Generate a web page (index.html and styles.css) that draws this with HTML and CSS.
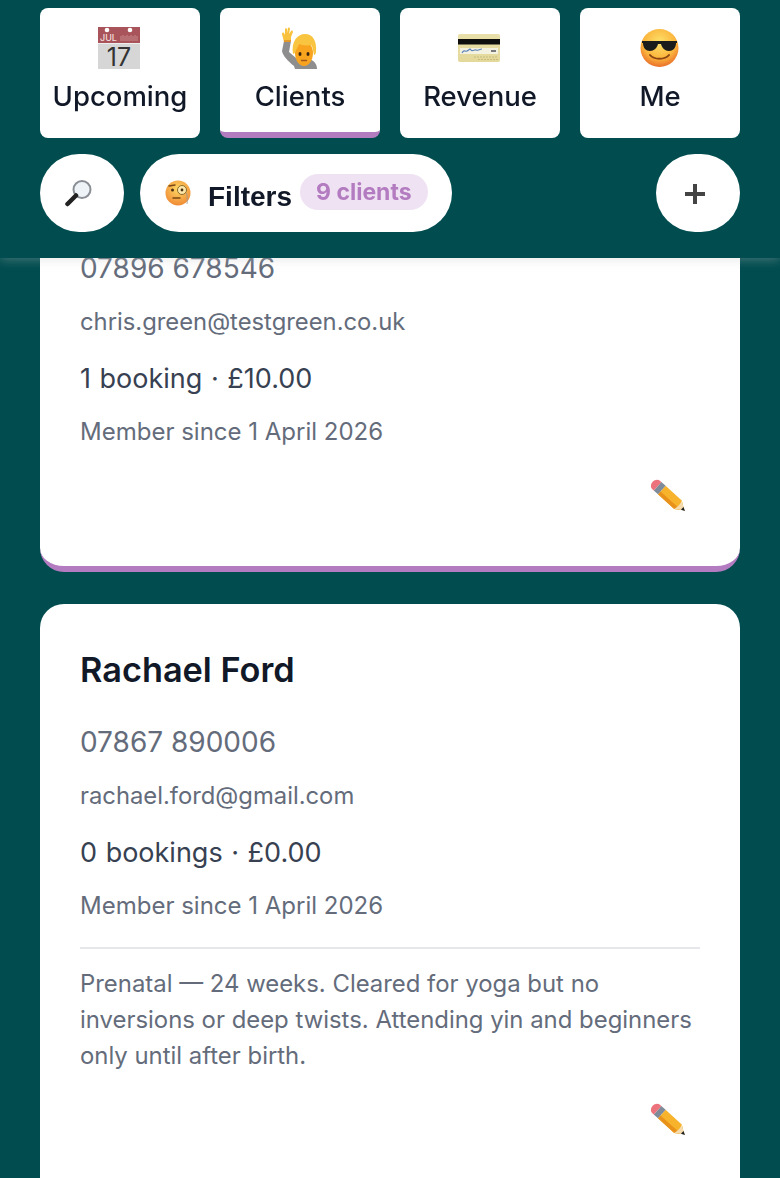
FILE: index.html
```html
<!DOCTYPE html>
<html lang="en">
<head>
  <meta charset="UTF-8" />
  <title>Clients</title>
  <meta name="viewport" content="width=device-width, initial-scale=1.0" />
  <link rel="stylesheet" href="styles.css">
</head>
<body>
  <header class="topbar">
    <nav class="tabs">
      <a class="tab">
        <svg class="tab-icon" viewBox="0 0 44 44">
          <rect x="0" y="1" width="42" height="42" fill="#d6d6d6"/>
          <rect x="0" y="1" width="42" height="16" fill="#a9545a"/>
          <rect x="0" y="17" width="42" height="1" fill="#eee"/>
          <circle cx="9" cy="4" r="2.3" fill="#fff"/>
          <circle cx="32" cy="4" r="2.3" fill="#fff"/>
          <text x="2" y="14.5" class="cal-month">JUL</text>
          <path d="M23 10v5M25 9v6M27 10v5M29 9v6M31 10v5M33 9v6M35 10v5M37 9v6M39 10v5" stroke="#c58a8e" stroke-width="1"/>
          <text x="21" y="39.5" class="cal-day">17</text>
        </svg>
        <span>Upcoming</span>
      </a>
      <a class="tab tab-active">
        <svg class="tab-icon" viewBox="0 0 44 44">
          <path d="M6 15h7l-2 11 7 6 12 1c6 1 9 5 9 10H17l-1-3c-6-5-11-10-12-15z" fill="#8e8e8e"/>
          <path d="M6 16 4 8c0-1 1-2 2-1l1 2V3c0-1 2-1 2 0v4l1-5c1-1 2 0 2 1l-1 5 2-3c1-1 2 0 2 1l-2 5v4z" fill="#f8c23e"/>
          <path d="M6 14h7v2H6z" fill="#e69a2a"/>
          <path d="M17 27c0-7 4-11 9-11s9 4 9 11c0 7-4 13-9 13s-9-6-9-13z" fill="#f8a41e"/>
          <path d="M15 28c-2-12 4-20 12-20s12 7 11 18c0 1-1 3-2 3-1-4-1-8-3-10-5 1-10 0-12-1-1 3-3 6-4 8 0 1-1 2-2 2z" fill="#f9c440"/>
          <ellipse cx="22" cy="28" rx="1.5" ry="1.9" fill="#3b2412"/>
          <ellipse cx="30" cy="28" rx="1.5" ry="1.9" fill="#3b2412"/>
          <path d="M23.5 34.5h5" stroke="#a5561b" stroke-width="1.3" stroke-linecap="round"/>
        </svg>
        <span>Clients</span>
      </a>
      <a class="tab">
        <svg class="tab-icon" viewBox="0 0 44 44">
          <defs>
            <linearGradient id="cardGold" x1="0" y1="0" x2="0" y2="1">
              <stop offset="0" stop-color="#e8dfaa"/>
              <stop offset="1" stop-color="#e4d99a"/>
            </linearGradient>
          </defs>
          <rect x="0" y="8" width="42" height="28" rx="2" fill="url(#cardGold)"/>
          <rect x="0" y="13" width="42" height="5.5" fill="#0e0e0e"/>
          <rect x="2" y="22" width="38" height="6" fill="#f3f1df"/>
          <path d="M4 27c2-4 3-1 5-2s3-3 4-1 4-1 5 0 4-1 6-1" stroke="#5f83bb" stroke-width="1.1" fill="none"/>
          <rect x="33" y="24" width="5" height="2" fill="#7a7a7a"/>
          <path d="M16 31h24M20 33.5h20" stroke="#c9bb7c" stroke-width="1" stroke-dasharray="2 1"/>
        </svg>
        <span>Revenue</span>
      </a>
      <a class="tab">
        <svg class="tab-icon" viewBox="0 0 44 44">
          <defs>
            <radialGradient id="faceSun" cx="50%" cy="35%" r="65%">
              <stop offset="0" stop-color="#fde16a"/>
              <stop offset="0.65" stop-color="#fbb53c"/>
              <stop offset="1" stop-color="#ea6f2a"/>
            </radialGradient>
          </defs>
          <circle cx="21.5" cy="22" r="19" fill="url(#faceSun)"/>
          <path d="M4 15h35v2h-1c0 5-3 8-7 8s-7-3-8-7h-3c-1 4-4 7-8 7s-7-3-7-8H4z" fill="#1b1b1b"/>
          <path d="M12 29c4 5 15 5 19 0" stroke="#8a4513" stroke-width="2" fill="none" stroke-linecap="round"/>
        </svg>
        <span>Me</span>
      </a>
    </nav>
    <div class="actions">
      <button class="round-btn search-btn">
        <svg class="btn-icon" viewBox="0 0 28 28">
          <circle cx="18" cy="10.5" r="8.5" fill="#eef3f7" stroke="#8a8f96" stroke-width="2"/>
          <path d="M12 16.5 3.5 25" stroke="#222" stroke-width="4.5" stroke-linecap="round"/>
        </svg>
      </button>
      <button class="filter-btn">
        <svg class="btn-icon" viewBox="0 0 28 28">
          <defs>
            <radialGradient id="faceThink" cx="50%" cy="35%" r="65%">
              <stop offset="0" stop-color="#fdd862"/>
              <stop offset="1" stop-color="#f08a35"/>
            </radialGradient>
          </defs>
          <circle cx="14" cy="14" r="12.5" fill="url(#faceThink)"/>
          <circle cx="18" cy="11" r="4.5" fill="#fde7a8" stroke="#8a6a2c" stroke-width="1"/>
          <circle cx="18" cy="11" r="1.4" fill="#4a3116"/>
          <circle cx="8.5" cy="11" r="1.5" fill="#4a3116"/>
          <path d="M5 7l6-1M9 19h7" stroke="#7a4a15" stroke-width="1.4" stroke-linecap="round"/>
          <path d="M22.5 14c1 4 1 8 .5 11" stroke="#999" stroke-width=".8" fill="none"/>
        </svg>
        <span class="filter-label">Filters</span>
        <span class="count-pill">9 clients</span>
      </button>
      <button class="round-btn add-btn">
        <svg class="plus" viewBox="0 0 22 22"><path d="M11 1v20M1 11h20" stroke="#444" stroke-width="4"/></svg>
      </button>
    </div>
  </header>

  <main class="client-list">
    <article class="client-card card-selected">
      <p class="client-phone">07896 678546</p>
      <p class="client-email">chris.green@testgreen.co.uk</p>
      <p class="client-stats">1 booking · £10.00</p>
      <p class="client-since">Member since 1 April 2026</p>
      <div class="card-actions"><svg class="edit-icon" viewBox="0 0 38 38"><use href="#pencil"/></svg></div>
    </article>

    <article class="client-card">
      <h2 class="client-name">Rachael Ford</h2>
      <p class="client-phone">07867 890006</p>
      <p class="client-email">rachael.ford@gmail.com</p>
      <p class="client-stats">0 bookings · £0.00</p>
      <p class="client-since">Member since 1 April 2026</p>
      <p class="client-notes">Prenatal — 24 weeks. Cleared for yoga but no inversions or deep twists. Attending yin and beginners only until after birth.</p>
      <div class="card-actions"><svg class="edit-icon" viewBox="0 0 38 38"><use href="#pencil"/></svg></div>
    </article>
  </main>

  <svg class="icon-defs" width="0" height="0">
    <defs>
      <g id="pencil" transform="translate(5 5) rotate(42)">
        <path d="M10 -6H33L42 0 33 6H10z" fill="#f7b32b"/>
        <path d="M10 2H38L42 0 33 6H10z" fill="#e8921c"/>
        <path d="M33 -6 42 0 33 6C34.5 2 34.5 -2 33 -6z" fill="#f5dcae"/>
        <path d="M39 -2 43 0 39 2z" fill="#222"/>
        <path d="M4 -6H10V6H4z" fill="#7f8b99"/>
        <path d="M4 -6V6H2C-1 6 -3 3 -3 0S-1 -6 2 -6z" fill="#ec737b"/>
      </g>
    </defs>
  </svg>
</body>
</html>
```

FILE: styles.css
```css
* {
  box-sizing: border-box;
}

body {
  margin: 0;
  height: 1178px;
  overflow: hidden;
  background: #004c4f;
  font-family: Inter, "Liberation Sans", sans-serif;
  color: #111827;
}

/* header stays over the scrolled list */
.topbar {
  position: fixed;
  top: 0;
  left: 0;
  right: 0;
  height: 258px;
  padding: 8px 40px 0;
  background: #004c4f;
  box-shadow: 0 2px 10px rgba(193, 193, 193, 0.35);
  z-index: 10;
}

.tabs {
  display: grid;
  grid-template-columns: repeat(4, 1fr);
  gap: 20px;
}

.tab {
  height: 130px;
  padding-top: 18px;
  display: flex;
  flex-direction: column;
  align-items: center;
  background: #fff;
  border-radius: 8px;
  font-size: 27.5px;
  font-weight: 500;
  line-height: 34px;
}

.tab-active {
  border-bottom: 6px solid #b47cc0;
}

.tab-icon {
  width: 44px;
  height: 44px;
  margin-bottom: 9px;
}

.cal-month {
  font-size: 9px;
  fill: #f3dcdc;
}

.cal-day {
  font-size: 25px;
  font-weight: 400;
  fill: #333;
  text-anchor: middle;
}

.actions {
  display: flex;
  align-items: center;
  gap: 16px;
  margin-top: 16px;
}

.round-btn,
.filter-btn {
  height: 78px;
  border: none;
  background: #fff;
  border-radius: 39px;
  display: flex;
  align-items: center;
  font-family: inherit;
  padding: 0;
}

.round-btn {
  width: 84px;
  justify-content: center;
}

.search-btn {
  padding-right: 8px;
}

.add-btn {
  margin-left: auto;
  padding: 2px 6px 0 0;
}

.btn-icon {
  width: 28px;
  height: 28px;
}

.plus {
  width: 22px;
  height: 22px;
}

.filter-btn {
  width: 312px;
  padding-left: 24px;
}

.filter-label {
  margin: 8px 0 0 16px;
  font-family: "Liberation Sans", Arial, sans-serif;
  font-size: 28px;
  font-weight: 700;
  color: #111827;
}

.count-pill {
  margin: -2px 0 0 8px;
  height: 36px;
  padding: 0 16px;
  border-radius: 18px;
  background: #efe2f3;
  color: #b47cc0;
  font-size: 23px;
  font-weight: 700;
  line-height: 36px;
}

.client-list {
  padding: 130px 40px 0;
  display: flex;
  flex-direction: column;
  gap: 32px;
}

.client-card {
  background: #fff;
  border-radius: 24px;
  padding: 41px 40px 68px;
}

/* top of this card has scrolled under the header */
.card-selected {
  border-bottom: 6px solid #b47cc0;
  height: 442px;
  padding-top: 117px;
}

.client-name {
  margin: 0 0 26px;
  font-size: 34.3px;
  font-weight: 600;
  line-height: 50px;
}

.client-phone {
  margin: 0 0 15px;
  font-size: 28px;
  line-height: 42px;
  color: #646c7b;
}

.client-email {
  margin: 0 0 18px;
  font-size: 23.8px;
  line-height: 36px;
  color: #646c7b;
}

.client-stats {
  margin: 0 0 14px;
  font-size: 27px;
  word-spacing: 1px;
  line-height: 42px;
  color: #374151;
}

.client-since {
  margin: 0;
  font-size: 24px;
  line-height: 36px;
  color: #646c7b;
}

.client-notes {
  margin: 23px 0 0;
  padding-top: 17px;
  border-top: 2px solid #e5e7eb;
  font-size: 23.9px;
  line-height: 36px;
  color: #646c7b;
}

.card-actions {
  display: flex;
  justify-content: flex-end;
  padding: 29px 14px 0 0;
}

.edit-icon {
  width: 36px;
  height: 36px;
}

.icon-defs {
  position: absolute;
}
```
